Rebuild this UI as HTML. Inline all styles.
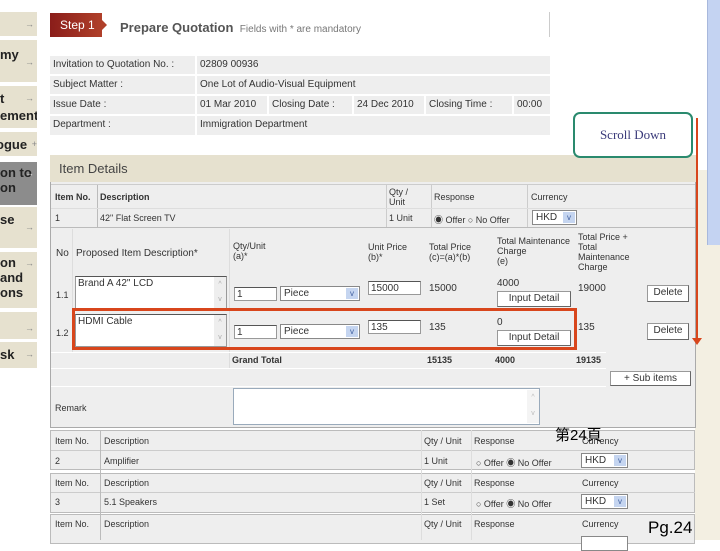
<!DOCTYPE html>
<html><head><meta charset="utf-8"><style>
*{margin:0;padding:0;box-sizing:border-box}
body{width:720px;height:540px;overflow:hidden;background:#fff;font-family:"Liberation Sans","Noto Sans CJK SC",sans-serif;font-size:9px;color:#333;position:relative}
.a{position:absolute}
.nav{position:absolute;left:0;width:37px;background:#e6e1cf;font-weight:bold;font-size:13px;color:#222;line-height:17px;overflow:hidden;white-space:nowrap}
.nav i{position:absolute;right:3px;top:4px;font-style:normal;font-size:9px;color:#888;font-weight:normal}
.c{position:absolute;background:#eeeeee;padding:3px 3px;white-space:nowrap;overflow:hidden;font-size:10px}
.inp{position:absolute;background:#fff;border:1px solid #999;border-top-color:#555;font-size:10px;padding-left:2px;line-height:13px}
.btn{position:absolute;background:#fff;border:1px solid #999;border-right-color:#666;border-bottom-color:#666;text-align:center;font-size:10px;line-height:14px}
.sel{position:absolute;background:#fff;border:1px solid #888;font-size:10px;line-height:13px;padding-left:3px}
.sel b{position:absolute;right:1px;top:1px;width:12px;height:11px;background:#c5d5f0;color:#4060a0;font-size:8px;text-align:center;line-height:11px;font-weight:normal}
.row{position:absolute;left:50px;width:645px;background:#eee;border:1px solid #bbb}
</style></head><body>
<!-- sidebar -->
<div class="nav" style="top:12px;height:24px"><i>→</i></div>
<div class="nav" style="top:40px;height:42px;padding-top:6px">my<i style="top:14px">→</i></div>
<div class="nav" style="top:86px;height:42px;padding-top:4px">t<br>ement<i>→</i></div>
<div class="nav" style="top:132px;height:24px;padding-top:4px;left:-4px;width:41px">ogue<i style="right:0">+</i></div>
<div class="nav" style="top:162px;height:43px;background:#8c8c8c;padding-top:3px;line-height:15px">on to<br>on<i style="color:#ddd">→</i></div>
<div class="nav" style="top:207px;height:41px;padding-top:4px">se<i style="top:12px">→</i></div>
<div class="nav" style="top:252px;height:56px;padding-top:3px;line-height:15px">on<br>and<br>ons<i>→</i></div>
<div class="nav" style="top:312px;height:27px"><i style="top:8px">→</i></div>
<div class="nav" style="top:342px;height:26px;padding-top:4px">sk<i>→</i></div>

<!-- step header -->
<div class="a" style="left:50px;top:13px;width:52px;height:24px;background:linear-gradient(90deg,#8a1d1a,#b0402a);color:#fff;font-size:12px;line-height:24px;padding-left:10px">Step 1</div>
<div class="a" style="left:102px;top:20px;width:0;height:0;border-left:5px solid #b0402a;border-top:5px solid transparent;border-bottom:5px solid transparent"></div>
<div class="a" style="left:120px;top:20px;font-size:13px;font-weight:bold;color:#555">Prepare Quotation <span style="font-weight:normal;font-size:10px;color:#777">&nbsp;Fields with * are mandatory</span></div>
<div class="a" style="left:549px;top:12px;width:1px;height:25px;background:#ccc"></div>

<!-- info table -->
<div class="c" style="left:50px;top:56px;width:145px;height:18px">Invitation to Quotation No. :</div>
<div class="c" style="left:197px;top:56px;width:353px;height:18px">02809 00936</div>
<div class="c" style="left:50px;top:76px;width:145px;height:18px">Subject Matter :</div>
<div class="c" style="left:197px;top:76px;width:353px;height:18px">One Lot of Audio-Visual Equipment</div>
<div class="c" style="left:50px;top:96px;width:145px;height:18px">Issue Date :</div>
<div class="c" style="left:197px;top:96px;width:70px;height:18px">01 Mar 2010</div>
<div class="c" style="left:269px;top:96px;width:83px;height:18px">Closing Date :</div>
<div class="c" style="left:354px;top:96px;width:70px;height:18px">24 Dec 2010</div>
<div class="c" style="left:426px;top:96px;width:86px;height:18px">Closing Time :</div>
<div class="c" style="left:514px;top:96px;width:36px;height:18px">00:00</div>
<div class="c" style="left:50px;top:116px;width:145px;height:19px">Department :</div>
<div class="c" style="left:197px;top:116px;width:353px;height:19px">Immigration Department</div>

<!-- right beige / scrollbar -->
<div class="a" style="left:695px;top:170px;width:12px;height:370px;background:#f3efe2"></div>
<div class="a" style="left:707px;top:0;width:13px;height:245px;background:#c4d3f2;border-left:1px solid #a8b8dc"></div>
<div class="a" style="left:707px;top:245px;width:13px;height:295px;background:#f3efe2"></div>

<!-- item details -->
<div class="a" style="left:50px;top:155px;width:646px;height:27px;background:#e6e1cf;font-size:13px;color:#444;padding:6px 0 0 9px">Item Details</div>
<div class="a" style="left:50px;top:182px;width:646px;height:246px;background:#eee;border:1px solid #aaa;border-top:none"></div>
<div class="a" style="left:51px;top:184px;width:644px;height:1px;background:#ccc"></div>
<div class="a" style="left:97px;top:185px;width:1px;height:42px;background:#bbb"></div>
<div class="a" style="left:386px;top:185px;width:1px;height:42px;background:#ccc"></div>
<div class="a" style="left:431px;top:185px;width:1px;height:42px;background:#ccc"></div>
<div class="a" style="left:527px;top:185px;width:1px;height:42px;background:#ccc"></div>
<div class="a" style="left:51px;top:208px;width:644px;height:1px;background:#ddd"></div>
<div class="a" style="left:51px;top:227px;width:644px;height:1px;background:#bbb"></div>
<div class="a" style="left:55px;top:192px;font-weight:bold">Item No.</div>
<div class="a" style="left:100px;top:192px;font-weight:bold">Description</div>
<div class="a" style="left:389px;top:187px;line-height:10px">Qty /<br>Unit</div>
<div class="a" style="left:434px;top:192px">Response</div>
<div class="a" style="left:531px;top:192px">Currency</div>
<div class="a" style="left:55px;top:213px">1</div>
<div class="a" style="left:100px;top:213px">42" Flat Screen TV</div>
<div class="a" style="left:389px;top:213px">1 Unit</div>
<div class="a" style="left:434px;top:213px">◉ Offer ○ No Offer</div>
<div class="sel" style="left:532px;top:210px;width:45px;height:15px">HKD<b>v</b></div>

<div class="a" style="left:72px;top:229px;width:1px;height:124px;background:#ddd"></div>
<div class="a" style="left:229px;top:229px;width:1px;height:140px;background:#ddd"></div>
<div class="a" style="left:56px;top:248px;font-size:10px">No</div>
<div class="a" style="left:76px;top:248px;font-size:10px">Proposed Item Description*</div>
<div class="a" style="left:233px;top:241px;line-height:10px">Qty/Unit<br>(a)*</div>
<div class="a" style="left:368px;top:242px;line-height:10px">Unit Price<br>(b)*</div>
<div class="a" style="left:429px;top:242px;line-height:10px">Total Price<br>(c)=(a)*(b)</div>
<div class="a" style="left:497px;top:236px;line-height:10px">Total Maintenance<br>Charge<br>(e)</div>
<div class="a" style="left:578px;top:232px;line-height:10px">Total Price +<br>Total<br>Maintenance<br>Charge</div>

<div class="a" style="left:56px;top:290px">1.1</div>
<div class="inp" style="left:75px;top:276px;width:152px;height:33px">Brand A 42" LCD<span style="position:absolute;right:0;top:0;width:12px;height:31px;background:#eee;color:#aaa;font-size:7px;text-align:center;line-height:15px">^<br>v</span></div>
<div class="inp" style="left:234px;top:287px;width:43px;height:14px">1</div>
<div class="sel" style="left:280px;top:286px;width:80px;height:15px">Piece<b>v</b></div>
<div class="inp" style="left:368px;top:281px;width:53px;height:14px">15000</div>
<div class="a" style="left:429px;top:283px;font-size:10px">15000</div>
<div class="a" style="left:497px;top:278px;font-size:10px">4000</div>
<div class="btn" style="left:497px;top:291px;width:74px;height:16px">Input Detail</div>
<div class="a" style="left:578px;top:283px;font-size:10px">19000</div>
<div class="btn" style="left:647px;top:285px;width:42px;height:17px">Delete</div>

<div class="a" style="left:56px;top:328px">1.2</div>
<div class="inp" style="left:75px;top:314px;width:152px;height:33px">HDMI Cable<span style="position:absolute;right:0;top:0;width:12px;height:31px;background:#eee;color:#aaa;font-size:7px;text-align:center;line-height:15px">^<br>v</span></div>
<div class="inp" style="left:234px;top:325px;width:43px;height:14px">1</div>
<div class="sel" style="left:280px;top:324px;width:80px;height:15px">Piece<b>v</b></div>
<div class="inp" style="left:368px;top:320px;width:53px;height:14px">135</div>
<div class="a" style="left:429px;top:322px;font-size:10px">135</div>
<div class="a" style="left:497px;top:317px;font-size:10px">0</div>
<div class="btn" style="left:497px;top:330px;width:74px;height:16px">Input Detail</div>
<div class="a" style="left:578px;top:322px;font-size:10px">135</div>
<div class="btn" style="left:647px;top:323px;width:42px;height:17px">Delete</div>

<div class="a" style="left:51px;top:352px;width:555px;height:1px;background:#fff"></div>
<div class="a" style="left:232px;top:355px;font-weight:bold">Grand Total</div>
<div class="a" style="left:427px;top:355px;font-weight:bold">15135</div>
<div class="a" style="left:495px;top:355px;font-weight:bold">4000</div>
<div class="a" style="left:576px;top:355px;font-weight:bold">19135</div>
<div class="a" style="left:51px;top:368px;width:555px;height:1px;background:#fff"></div>
<div class="btn" style="left:610px;top:371px;width:81px;height:15px">+ Sub items</div>
<div class="a" style="left:51px;top:386px;width:555px;height:1px;background:#fff"></div>
<div class="a" style="left:55px;top:403px">Remark</div>
<div class="a" style="left:233px;top:388px;width:307px;height:37px;background:#fff;border:1px solid #9ab"></div>
<div class="a" style="left:527px;top:390px;width:12px;height:33px;background:#f4f4f4;color:#bbb;font-size:7px;text-align:center;line-height:16px">^<br>v</div>

<!-- item rows 2-4 -->
<div class="row" style="top:430px;height:40px"></div>
<div class="row" style="top:473px;height:40px"></div>
<div class="row" style="top:514px;height:30px"></div>
<div class="a" style="left:51px;top:450px;width:644px;height:1px;background:#ccc"></div>
<div class="a" style="left:51px;top:492px;width:644px;height:1px;background:#ccc"></div>
<div class="a" style="left:100px;top:430px;width:1px;height:110px;background:#bbb"></div>
<div class="a" style="left:421px;top:430px;width:1px;height:110px;background:#ddd"></div>
<div class="a" style="left:471px;top:430px;width:1px;height:110px;background:#ddd"></div>
<div class="a" style="left:55px;top:436px">Item No.</div><div class="a" style="left:104px;top:436px">Description</div><div class="a" style="left:424px;top:436px">Qty / Unit</div><div class="a" style="left:474px;top:436px">Response</div><div class="a" style="left:582px;top:436px">Currency</div>
<div class="a" style="left:55px;top:456px">2</div><div class="a" style="left:104px;top:456px">Amplifier</div><div class="a" style="left:424px;top:456px">1 Unit</div><div class="a" style="left:476px;top:456px">○ Offer ◉ No Offer</div>
<div class="sel" style="left:581px;top:453px;width:47px;height:15px">HKD<b>v</b></div>
<div class="a" style="left:55px;top:478px">Item No.</div><div class="a" style="left:104px;top:478px">Description</div><div class="a" style="left:424px;top:478px">Qty / Unit</div><div class="a" style="left:474px;top:478px">Response</div><div class="a" style="left:582px;top:478px">Currency</div>
<div class="a" style="left:55px;top:497px">3</div><div class="a" style="left:104px;top:497px">5.1 Speakers</div><div class="a" style="left:424px;top:497px">1 Set</div><div class="a" style="left:476px;top:497px">○ Offer ◉ No Offer</div>
<div class="sel" style="left:581px;top:494px;width:47px;height:15px">HKD<b>v</b></div>
<div class="a" style="left:55px;top:519px">Item No.</div><div class="a" style="left:104px;top:519px">Description</div><div class="a" style="left:424px;top:519px">Qty / Unit</div><div class="a" style="left:474px;top:519px">Response</div><div class="a" style="left:582px;top:519px">Currency</div>
<div class="sel" style="left:581px;top:536px;width:47px;height:15px"></div>

<!-- overlays -->
<div class="a" style="left:72px;top:308px;width:505px;height:42px;border:3px solid #d8461c"></div>
<div class="a" style="left:573px;top:112px;width:120px;height:46px;border:2px solid #2a8a6e;border-radius:7px;background:#fff;font-family:'Liberation Serif',serif;font-size:13px;color:#3a3a7a;text-align:center;line-height:42px">Scroll Down</div>
<div class="a" style="left:696px;top:118px;width:2px;height:222px;background:#d8461c"></div>
<div class="a" style="left:692px;top:338px;width:0;height:0;border-top:7px solid #d8461c;border-left:5px solid transparent;border-right:5px solid transparent"></div>
<div class="a" style="left:555px;top:424px;font-size:15px;color:#000">第24頁</div>
<div class="a" style="left:648px;top:518px;font-size:17px;color:#000">Pg.24</div>
</body></html>
